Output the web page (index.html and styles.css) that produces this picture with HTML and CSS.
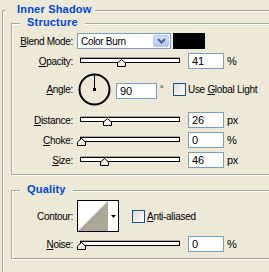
FILE: index.html
```html
<!DOCTYPE html>
<html>
<head lang="en">
  <meta charset="UTF-8">
  <title>Inner Shadow</title>
  <link rel="stylesheet" href="styles.css">
</head>
<body>
<fieldset class="group group-outer">
  <legend class="group-title title-outer">Inner Shadow</legend>

  <fieldset class="group group-inner group-structure">
    <legend class="group-title">Structure</legend>

    <div class="row row-blend">
      <label class="lbl"><u>B</u>lend Mode:</label>
      <div class="select">
        <span class="select-text">Color Burn</span>
        <span class="select-btn">
          <svg width="9" height="6" viewBox="0 0 9 6"><path d="M1 1 L4.5 4.5 L8 1" fill="none" stroke="#4d6185" stroke-width="2"/></svg>
        </span>
      </div>
      <span class="swatch"></span>
    </div>

    <div class="row">
      <label class="lbl"><u>O</u>pacity:</label>
      <div class="slider">
        <span class="thumb" style="left:36px"><svg width="9" height="8" viewBox="0 0 9 8"><path d="M4.5 0.5 L8.5 4 V7.5 H0.5 V4 Z" fill="#f1efe2" stroke="#000"/></svg></span>
      </div>
      <input class="field" type="text" value="41">
      <span class="unit">%</span>
    </div>

    <div class="row row-angle">
      <label class="lbl"><u>A</u>ngle:</label>
      <svg class="dial" width="33" height="33" viewBox="0 0 33 33">
        <circle cx="16.5" cy="16.5" r="15" fill="none" stroke="#000" stroke-width="2"/>
        <line x1="16.5" y1="16.5" x2="16.5" y2="2" stroke="#000" stroke-width="1"/>
        <rect x="15" y="15" width="3" height="3" fill="#000"/>
      </svg>
      <input class="field field-angle" type="text" value="90">
      <span class="deg">°</span>
      <span class="check"></span>
      <span class="check-text">Use <u>G</u>lobal Light</span>
    </div>

    <div class="row row-distance">
      <label class="lbl"><u>D</u>istance:</label>
      <div class="slider">
        <span class="thumb" style="left:22px"><svg width="9" height="8" viewBox="0 0 9 8"><path d="M4.5 0.5 L8.5 4 V7.5 H0.5 V4 Z" fill="#f1efe2" stroke="#000"/></svg></span>
      </div>
      <input class="field" type="text" value="26">
      <span class="unit">px</span>
    </div>

    <div class="row">
      <label class="lbl"><u>C</u>hoke:</label>
      <div class="slider">
        <span class="thumb" style="left:-4px"><svg width="9" height="8" viewBox="0 0 9 8"><path d="M4.5 0.5 L8.5 4 V7.5 H0.5 V4 Z" fill="#f1efe2" stroke="#000"/></svg></span>
      </div>
      <input class="field" type="text" value="0">
      <span class="unit">%</span>
    </div>

    <div class="row">
      <label class="lbl"><u>S</u>ize:</label>
      <div class="slider">
        <span class="thumb" style="left:19px"><svg width="9" height="8" viewBox="0 0 9 8"><path d="M4.5 0.5 L8.5 4 V7.5 H0.5 V4 Z" fill="#f1efe2" stroke="#000"/></svg></span>
      </div>
      <input class="field" type="text" value="46">
      <span class="unit">px</span>
    </div>
  </fieldset>

  <fieldset class="group group-inner group-quality">
    <legend class="group-title">Quality</legend>

    <div class="row row-contour">
      <label class="lbl">Contour:</label>
      <div class="contour">
        <svg class="contour-preview" width="30" height="30" viewBox="0 0 30 30">
          <rect width="30" height="30" fill="#fff"/>
          <polygon points="0,30 30,0 30,30" fill="#aca899"/>
        </svg>
        <span class="contour-arrow">
          <svg width="5" height="3" viewBox="0 0 5 3"><polygon points="0,0 5,0 2.5,3" fill="#000"/></svg>
        </span>
      </div>
      <span class="check check-aa"></span>
      <span class="check-text"><u>A</u>nti-aliased</span>
    </div>

    <div class="row">
      <label class="lbl"><u>N</u>oise:</label>
      <div class="slider">
        <span class="thumb" style="left:-4px"><svg width="9" height="8" viewBox="0 0 9 8"><path d="M4.5 0.5 L8.5 4 V7.5 H0.5 V4 Z" fill="#f1efe2" stroke="#000"/></svg></span>
      </div>
      <input class="field" type="text" value="0">
      <span class="unit">%</span>
    </div>
  </fieldset>
</fieldset>
</body>
</html>
```

FILE: styles.css
```css
html, body {
  margin: 0;
  height: 272px;
  overflow: hidden;
  background: #ece9d8;
}

body {
  font: 10px "Liberation Sans", Arial, sans-serif;
  letter-spacing: -0.3px;
  color: #000;
}

/* etched group frames */
.group {
  margin: 0;
  padding: 0;
  min-width: 0;
  border: 1px solid #aca899;
  box-shadow: inset 1px 1px 0 #fff, 1px 1px 0 #fff;
}

.group-outer {
  margin: 3px -30px 0 2px;
  padding-bottom: 40px;
}

.group-inner {
  margin-left: 8px;
  padding-bottom: 6px;
}

.group-structure {
  margin-top: -2px;
}

.group-quality {
  margin-top: 8px;
}

.group-title {
  margin-left: 8px;
  padding: 0 7px 2px;
  line-height: 13px;
  font-size: 11px;
  font-weight: bold;
  letter-spacing: 0.2px;
  color: #0046d5;
  background: #ece9d8;
}

.title-outer {
  margin-left: 2px;
  padding: 0 3px 2px 12px;
}

/* rows */
.row {
  display: flex;
  align-items: center;
  height: 16px;
  margin-top: 4px;
  white-space: nowrap;
}

.row-blend {
  margin-top: 2px;
}

.row-angle {
  height: 33px;
}

.row-distance {
  margin-top: 6px;
}

.row-contour {
  height: 32px;
  margin-top: 2px;
}

.lbl {
  flex: none;
  width: 61px;
  text-align: right;
}

/* blend mode select */
.select {
  display: flex;
  align-items: center;
  box-sizing: border-box;
  width: 94px;
  height: 16px;
  margin-left: 4px;
  border: 1px solid #7f9db9;
  background: #fff;
}

.select-text {
  flex: 1;
  padding-left: 3px;
}

.select-btn {
  display: flex;
  align-items: center;
  justify-content: center;
  box-sizing: border-box;
  width: 16px;
  height: 12px;
  margin-right: 1px;
  border: 1px solid #b5c8f4;
  border-radius: 2px;
  background: linear-gradient(#d3e0fd, #b2c7f5);
}

.swatch {
  width: 32px;
  height: 16px;
  margin-left: 2px;
  background: #000;
}

/* sliders */
.slider {
  position: relative;
  box-sizing: border-box;
  width: 100px;
  height: 5px;
  margin: 0 0 1px 7px;
  border: 1px solid #000;
  background: #fffff4;
  box-shadow: 0 -1px 0 #aca899;
}

.thumb {
  position: absolute;
  top: 0;
  width: 9px;
  height: 8px;
}

.thumb svg {
  display: block;
}

.field {
  box-sizing: border-box;
  width: 36px;
  height: 16px;
  margin: 0 0 0 8px;
  padding: 0 0 0 3px;
  border: 1px solid #7f9db9;
  background: #fff;
  font: 11px "Liberation Sans", Arial, sans-serif;
  color: #000;
  outline: none;
}

.unit {
  margin-left: 3px;
  font-size: 11px;
}

/* angle */
.dial {
  margin-left: 5px;
  flex: none;
}

.field-angle {
  width: 41px;
  margin-left: 5px;
  margin-top: 2px;
}

.deg {
  width: 13px;
  margin-left: 3px;
  align-self: flex-start;
  margin-top: 11px;
  font-size: 9px;
}

.check {
  flex: none;
  box-sizing: border-box;
  width: 13px;
  height: 13px;
  border: 1px solid #1c5180;
  background: linear-gradient(135deg, #dcdcd4, #fff);
}

.check-text {
  margin-left: 2px;
}

/* contour */
.contour {
  display: flex;
  box-sizing: border-box;
  width: 42px;
  height: 32px;
  margin-left: 4px;
  border: 1px solid #000;
  background: #fff;
}

.contour-preview {
  display: block;
  border-right: 1px solid #fff;
}

.contour-arrow {
  display: flex;
  align-items: center;
  justify-content: center;
  flex: 1;
}

.check-aa {
  margin-left: 13px;
}
```
